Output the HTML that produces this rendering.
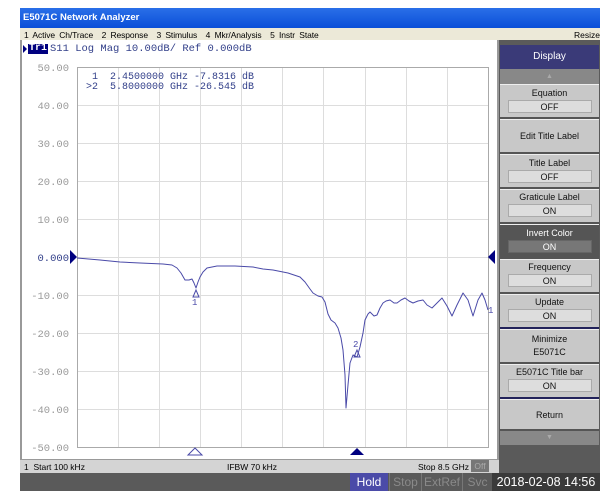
<!DOCTYPE html><html><head><style>
*{margin:0;padding:0;box-sizing:border-box}
body{width:610px;height:500px;background:#fff;position:relative;overflow:hidden;font-family:"Liberation Sans",sans-serif}
.a{position:absolute}
.t{font-size:8.5px;color:#000;white-space:nowrap}
.m{font-family:"Liberation Mono",monospace}
.btn{position:absolute;left:500px;width:99px;background:#c8c8c8;border-top:1px solid #eee;border-bottom:2px solid #555;text-align:center;font-size:9px;color:#111}
.val{margin:2px auto 0;width:84px;height:13px;background:#ddd;border:1px solid #aaa;font-size:9px;line-height:12px}
.sb{position:absolute;top:473px;height:18px;font-size:12px;line-height:18px;color:#8a8a8a;border-left:1px solid #777;text-align:center}
</style></head><body>
<div class="a" style="left:20px;top:8px;width:580px;height:20px;background:linear-gradient(#2a6fe8,#0a4fd8);"></div>
<div class="a" style="left:23px;top:12px;font-size:9.5px;font-weight:bold;color:#fff">E5071C Network Analyzer</div>
<div class="a" style="left:20px;top:28px;width:580px;height:12px;background:#ece9d8"></div>
<div class="a t" style="left:24px;top:30px;word-spacing:2px;letter-spacing:-0.1px">1 Active Ch/Trace &nbsp;2 Response &nbsp;3 Stimulus &nbsp;4 Mkr/Analysis &nbsp;5 Instr State</div>
<div class="a t" style="left:574px;top:30px">Resize</div>
<div class="a" style="left:20px;top:40px;width:479px;height:420px;background:#fff;border-left:2px solid #999;border-right:2px solid #999"></div>
<div class="a" style="left:23px;top:45px;width:0;height:0;border-top:4px solid transparent;border-bottom:4px solid transparent;border-left:4px solid #000080"></div>
<div class="a m" style="left:28px;top:44px;font-size:10px;color:#fff;background:#000080;font-weight:bold;line-height:10px;padding:0 1px">Tr1</div>
<div class="a m" style="left:50px;top:44px;font-size:10.5px;line-height:10px;color:#33408a">S11 Log Mag 10.00dB/ Ref 0.000dB</div>
<svg class="a" style="left:0;top:0" width="610" height="500">
<g stroke="#ddd" stroke-width="1">
<line x1="118.5" y1="67" x2="118.5" y2="447"/><line x1="159.5" y1="67" x2="159.5" y2="447"/><line x1="200.5" y1="67" x2="200.5" y2="447"/><line x1="241.5" y1="67" x2="241.5" y2="447"/><line x1="282.5" y1="67" x2="282.5" y2="447"/><line x1="323.5" y1="67" x2="323.5" y2="447"/><line x1="365.5" y1="67" x2="365.5" y2="447"/><line x1="406.5" y1="67" x2="406.5" y2="447"/><line x1="447.5" y1="67" x2="447.5" y2="447"/>
<line x1="77" y1="105.5" x2="488" y2="105.5"/><line x1="77" y1="143.5" x2="488" y2="143.5"/><line x1="77" y1="181.5" x2="488" y2="181.5"/><line x1="77" y1="219.5" x2="488" y2="219.5"/><line x1="77" y1="257.5" x2="488" y2="257.5"/><line x1="77" y1="295.5" x2="488" y2="295.5"/><line x1="77" y1="333.5" x2="488" y2="333.5"/><line x1="77" y1="371.5" x2="488" y2="371.5"/><line x1="77" y1="409.5" x2="488" y2="409.5"/>
</g>
<rect x="77.5" y="67.5" width="411" height="380" fill="none" stroke="#aaa"/>
<g font-family="Liberation Mono,monospace" font-size="10.5" fill="#9a9a9a" text-anchor="end">
<text x="69" y="71">50.00</text><text x="69" y="109">40.00</text><text x="69" y="147">30.00</text><text x="69" y="185">20.00</text><text x="69" y="223">10.00</text><text x="69" y="261" fill="#33408a">0.000</text><text x="69" y="299">-10.00</text><text x="69" y="337">-20.00</text><text x="69" y="375">-30.00</text><text x="69" y="413">-40.00</text><text x="69" y="451">-50.00</text>
</g>
<g font-family="Liberation Mono,monospace" font-size="10" fill="#33408a">
<text x="80" y="79" xml:space="preserve">  1  2.4500000 GHz -7.8316 dB</text>
<text x="80" y="89" xml:space="preserve"> &gt;2  5.8000000 GHz -26.545 dB</text>
</g>
<polyline fill="none" stroke="#4a4aa8" stroke-width="1" stroke-linejoin="round" points="77,258 100,260 120,262 140,263 163,264 172,265 177,268 181,273 185,280 189,280 192,279 194,283 196,288 198,282 200,277 203,272 207,268 212,267 217,266 235,266 253,267 263,269 273,270 288,273 300,277 305,282 310,289 313,293 318,296 322,297 325,302 328,314 331,320 335,323 338,328 341,338 343,350 345,375 346,408 348,385 350,363 353,355 357,357 360,347 363,333 365,320 368,314 370,312 374,316 377,315 380,308 383,303 386,301 390,300 394,303 397,303 401,300 405,298 409,301 413,303 418,301 423,300 427,305 432,308 437,303 442,298 447,306 452,316 457,305 463,293 468,300 473,316 478,300 482,293 485,300 488,310"/>
<path d="M196,290 l-3,7 h6z" fill="none" stroke="#4a4aa8"/>
<text x="192" y="305" font-size="9" fill="#4a4aa8" font-family="Liberation Mono,monospace">1</text>
<path d="M357,350 l-3,7 h6z" fill="none" stroke="#4a4aa8"/>
<text x="353" y="347" font-size="9" fill="#4a4aa8" font-family="Liberation Mono,monospace">2</text>
<text x="488" y="313" font-size="9" fill="#4a4aa8" font-family="Liberation Mono,monospace">1</text>
<path d="M70,250 l7,7 l-7,7z" fill="#000080"/>
<path d="M495,250 l-7,7 l7,7z" fill="#000080"/>
<path d="M195,448 l-7,7 h14z" fill="none" stroke="#4a4aa8"/>
<path d="M357,448 l-7,7 h14z" fill="#000080"/>
</svg>
<div class="a" style="left:20px;top:459px;width:479px;height:14px;background:#d4d4d4;border-top:1px solid #999"></div>
<div class="a t" style="left:24px;top:462px">1 &nbsp;Start 100 kHz</div>
<div class="a t" style="left:227px;top:462px">IFBW 70 kHz</div>
<div class="a t" style="left:418px;top:462px">Stop 8.5 GHz</div>
<div class="a t" style="left:471px;top:460px;width:18px;height:12px;background:#777;color:#aaa;text-align:center;line-height:12px">Off</div>
<div class="a" style="left:20px;top:473px;width:580px;height:18px;background:#5a5a5a"></div>
<div class="a" style="left:350px;top:473px;width:38px;height:18px;background:#4b4ba8;color:#fff;font-size:12px;text-align:center;line-height:18px">Hold</div>
<div class="sb" style="left:389px;width:32px">Stop</div>
<div class="sb" style="left:421px;width:41px">ExtRef</div>
<div class="sb" style="left:462px;width:30px">Svc</div>
<div class="a" style="left:492px;top:473px;width:108px;height:18px;background:#3a3a3a;color:#fff;font-size:12.5px;line-height:18px;text-align:center">2018-02-08 14:56</div>
<div class="a" style="left:499px;top:40px;width:101px;height:433px;background:#5a5a5a"></div>
<div class="a" style="left:500px;top:45px;width:99px;height:24px;background:#3a3a78;color:#fff;font-size:10px;text-align:center;line-height:24px">Display</div>
<div class="a" style="left:500px;top:69px;width:99px;height:15px;background:#888;color:#aaa;font-size:7px;text-align:center;line-height:15px">▲</div>
<div class="btn" style="top:84px;height:35px;padding-top:3px">Equation<div class="val">OFF</div></div>
<div class="btn" style="top:119px;height:35px;line-height:32px">Edit Title Label</div>
<div class="btn" style="top:154px;height:35px;padding-top:3px">Title Label<div class="val">OFF</div></div>
<div class="btn" style="top:189px;height:35px;padding-top:2px">Graticule Label<div class="val">ON</div></div>
<div class="btn" style="top:224px;height:35px;padding-top:3px;background:#555;color:#fff">Invert Color<div class="val" style="background:#777;border-color:#666;color:#fff">ON</div></div>
<div class="btn" style="top:259px;height:35px;padding-top:2px">Frequency<div class="val">ON</div></div>
<div class="btn" style="top:294px;height:35px;padding-top:2px;border-bottom-color:#22225a">Update<div class="val">ON</div></div>
<div class="btn" style="top:329px;height:35px;padding-top:3px;line-height:13px">Minimize<br>E5071C</div>
<div class="btn" style="top:364px;height:35px;padding-top:2px;border-bottom-color:#22225a">E5071C Title bar<div class="val">ON</div></div>
<div class="btn" style="top:399px;height:32px;line-height:30px">Return</div>
<div class="a" style="left:500px;top:431px;width:99px;height:14px;background:#888;color:#aaa;font-size:7px;text-align:center;line-height:14px">▼</div>
</body></html>
